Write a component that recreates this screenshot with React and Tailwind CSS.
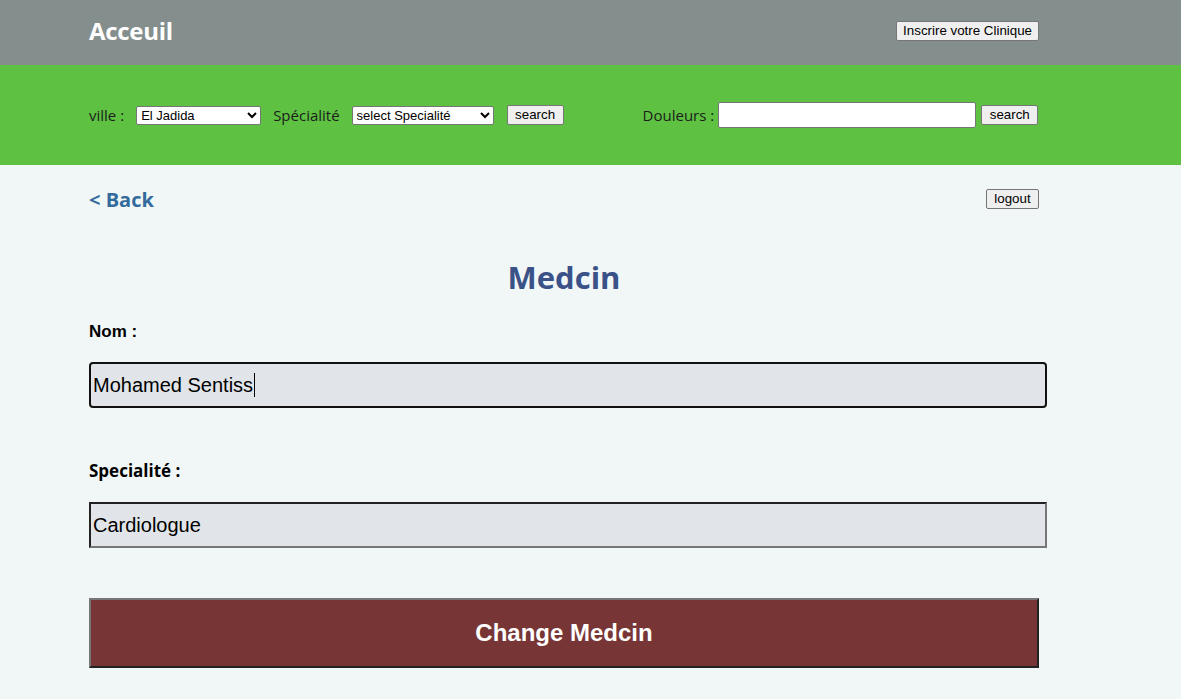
export default function App() {
  const btn =
    "bg-[#efefef] border border-[#767676] rounded-[2px] text-[13.33px] text-black leading-none px-[6px] font-['Liberation_Sans',Arial,sans-serif]";
  const sel =
    "bg-white border border-[#767676] rounded-[2px] text-[13px] text-black h-[19px] font-['Liberation_Sans',Arial,sans-serif]";
  return (
    <div className="min-h-[699px] bg-[#f1f7f7] font-['Open_Sans','Noto_Sans',sans-serif]">
      <header className="h-[65px] bg-[#848e8d] flex items-center justify-between pl-[89px] pr-[142px]">
        <h1 className="text-[24px] font-bold text-white tracking-[-0.3px] -mt-[4px]">Acceuil</h1>
        <button className={btn + " h-[20px] -mt-[3px]"}>Inscrire votre Clinique</button>
      </header>
      <nav className="h-[100px] bg-[#5ec142] flex items-center pl-[89px] pr-[142px] text-[15px] text-[#1c1c1c]">
        <span>ville :</span>
        <select className={sel + " ml-[12px] w-[125px]"} defaultValue="El Jadida">
          <option>El Jadida</option>
        </select>
        <span className="ml-[12px]">Spécialité</span>
        <select className={sel + " ml-[12px] w-[142px]"}>
          <option>select Specialité</option>
        </select>
        <button className={btn + " ml-[13px] h-[20px] w-[57px]"}>search</button>
        <span className="ml-[79px]">Douleurs :</span>
        <input className="ml-[4px] w-[258px] h-[26px] bg-white border border-[#767676] rounded-[2px]" />
        <button className={btn + " ml-[5px] h-[20px] w-[57px]"}>search</button>
      </nav>
      <main className="pl-[89px] pr-[142px]">
        <div className="flex justify-between items-start pt-[23px]">
          <a className="text-[20px] font-bold text-[#336b9c] leading-[24px]">&lt; Back</a>
          <button className={btn + " h-[20px] w-[53px] mt-[1px]"}>logout</button>
        </div>
        <h2 className="text-center text-[31px] font-bold text-[#3b5288] mt-[45px] leading-[40px]">
          Medcin
        </h2>
        <label className="block mt-[24px] text-[17px] font-bold text-black leading-[22px] font-['Liberation_Sans',Arial,sans-serif]">
          Nom :
        </label>
        <div className="mt-[19px] w-[958px] h-[46px] bg-[#e1e5e9] border-2 border-[#111] rounded-[4px] flex items-center pl-[2px] text-[20px] text-black font-['Liberation_Sans',Arial,sans-serif]">
          Mohamed Sentiss<span className="inline-block w-[1px] h-[24px] bg-black ml-[1px]"></span>
        </div>
        <label className="block mt-[52px] text-[17px] font-bold text-black leading-[22px]">
          Specialité :
        </label>
        <div className="mt-[20px] w-[958px] h-[46px] bg-[#e1e5e9] border-2 border-t-[#222] border-l-[#222] border-b-[#767676] border-r-[#767676] flex items-center pl-[2px] text-[20px] text-black font-['Liberation_Sans',Arial,sans-serif]">
          Cardiologue
        </div>
        <button className="mt-[50px] w-[950px] h-[70px] bg-[#773535] border-2 border-t-[#767676] border-l-[#767676] border-b-[#222] border-r-[#222] text-white text-[24px] font-bold font-['Liberation_Sans',Arial,sans-serif]">
          Change Medcin
        </button>
      </main>
    </div>
  );
}
